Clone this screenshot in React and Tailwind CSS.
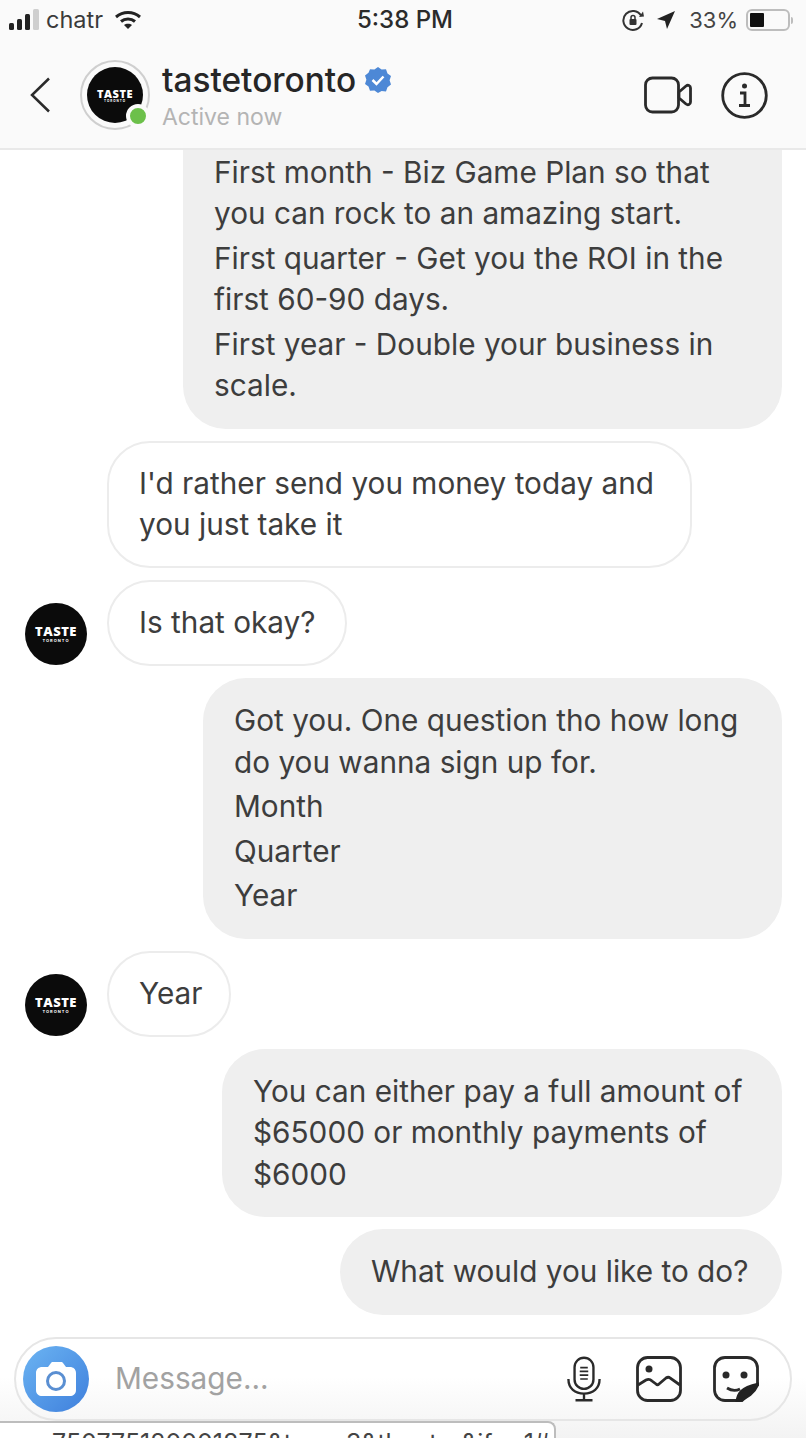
function Avatar({ size = 'w-[62px] h-[62px]', big = 'text-[13px]', small = 'text-[4px]' }) {
  return (
    <div className={`${size} rounded-full bg-[#0b0b0b] flex flex-col items-center justify-center shrink-0 text-white leading-none`}>
      <span className={`${big} font-black tracking-[0.5px] font-['Open_Sans',sans-serif]`}>TASTE</span>
      <span className={`${small} font-bold tracking-[1px] mt-[1px] whitespace-nowrap`}>TORONTO</span>
    </div>
  )
}

function Them({ width, avatar, children }) {
  return (
    <div className="flex items-center pl-[25px]">
      <div className="w-[82px] shrink-0 pt-[22px]">{avatar && <Avatar />}</div>
      <div className={`${width} rounded-[43px] border-2 border-[#ececec] bg-white pl-[30px] py-[20.25px] whitespace-nowrap`}>{children}</div>
    </div>
  )
}

function Me({ width, children, className = 'py-[22.25px]' }) {
  return (
    <div className="flex justify-end pr-[24px]">
      <div className={`${width} ${className} rounded-[43px] bg-[#efefef] pl-[31px] flex flex-col gap-[3px] whitespace-nowrap`}>{children}</div>
    </div>
  )
}

function StatusBar() {
  return (
    <div className="grid grid-cols-3 items-center h-[40px] pl-[9px] pr-[13px] text-[23.5px] leading-none">
      <div className="flex items-center text-[#3a3a3a]">
        <svg width="31" height="22" viewBox="0 0 31 22" fill="currentColor">
          <rect x="0" y="14" width="5" height="7" rx="1.5" fill="#222" />
          <rect x="8" y="10" width="5" height="11" rx="1.5" fill="#222" />
          <rect x="16" y="5" width="5" height="16" rx="1.5" fill="#222" />
          <rect x="24" y="0" width="6" height="21" rx="1.5" fill="#cfcfcf" />
        </svg>
        <span className="ml-[6px] mr-[11px]">chatr</span>
        <svg width="28" height="20" viewBox="0 0 28 20" fill="none" stroke="#222" strokeWidth="3">
          <path d="M2 7c7-6 17-6 24 0" />
          <path d="M7 11.500c4-3.500 10-3.500 14 0" />
          <path d="M14 19l-4-4c2-1.800 6-1.800 8 0z" fill="#222" stroke="none" />
        </svg>
      </div>
      <div className="text-center font-medium text-[#2b2b2b] pl-[8px] text-[24px]">5:38 PM</div>
      <div className="flex items-center justify-end text-[#444]">
        <svg width="23" height="23" viewBox="0 0 23 23" fill="none" stroke="#333" strokeWidth="2">
          <path d="M19 6.500A9.500 9.500 0 1 0 20 14" />
          <path d="M17 8l5-.5-1-5" fill="#333" stroke="none" />
          <rect x="7.500" y="10" width="7" height="6" rx="1" fill="#333" stroke="none" />
          <path d="M9 10V8.500a2 2 0 0 1 4 0V10" strokeWidth="1.500" />
        </svg>
        <svg className="ml-[11px]" width="20" height="20" viewBox="0 0 20 20" fill="#222">
          <path d="M19 1L1 9l8 2 2 8z" />
        </svg>
        <span className="ml-[13px] text-[22px]">33%</span>
        <div className="ml-[8px] flex items-center">
          <div className="w-[44px] h-[22px] rounded-[6px] border-2 border-[#bdbdbd] p-[2px]">
            <div className="w-[14px] h-full bg-[#111] rounded-[1px]" />
          </div>
          <div className="w-[2px] h-[7px] ml-[1px] bg-[#bdbdbd] rounded-r" />
        </div>
      </div>
    </div>
  )
}

function Header() {
  return (
    <div className="relative z-10 h-[150px] shrink-0 bg-[#fafafa] border-b-2 border-[#e9e9e9]">
      <StatusBar />
      <div className="flex items-center h-[108px] pt-[2px] pl-[30px] pr-[38px]">
        <svg width="20" height="36" viewBox="0 0 20 36" fill="none" stroke="#2a2a2a" strokeWidth="2.500" className="shrink-0">
          <path d="M19 1.500L2 18l17 16.500" />
        </svg>
        <div className="relative ml-[30px] w-[70px] h-[70px] rounded-full border-2 border-[#cfcfcf] flex items-center justify-center shrink-0">
          <Avatar size="w-[56px] h-[56px]" big="text-[11px]" small="text-[3px]" />
          <div className="absolute right-[-2px] bottom-[0px] w-[24px] h-[24px] rounded-full bg-[#6cc04a] border-[4px] border-[#fafafa]" />
        </div>
        <div className="ml-[12px] pt-[2px]">
          <div className="flex items-center">
            <span className="text-[33.4px] leading-[38px] font-medium text-[#262626]">tastetoronto</span>
            <svg className="ml-[8px]" width="28" height="28" viewBox="0 0 28 28">
              <path fill="#4d88d6" d="M14 1l3.600 2.600 4.400-.4 1.500 4.200 3.500 2.700-1.400 4.200 1.400 4.200-3.500 2.700-1.500 4.200-4.400-.4L14 27l-3.600-2.600-4.400.4-1.500-4.200L1 17.900l1.400-4.200L1 9.500l3.500-2.700L6 3.200l4.400.4z" />
              <path fill="none" stroke="#fff" strokeWidth="2.500" d="M8.500 14l4 4 7-7.500" />
            </svg>
          </div>
          <div className="mt-[3px] text-[23px] leading-[30px] text-[#b4b4b4]">Active now</div>
        </div>
        <div className="ml-auto flex items-center">
          <svg width="48" height="38" viewBox="0 0 48 38" fill="none" stroke="#2a2a2a" strokeWidth="2.800" strokeLinejoin="round">
            <rect x="1.500" y="2" width="33" height="34" rx="7" />
            <path d="M35 16l7-6c2-1.500 4.500-.5 4.500 2v14c0 2.500-2.500 3.500-4.500 2l-7-6z" />
          </svg>
          <svg className="ml-[29px]" width="47" height="47" viewBox="0 0 47 47" fill="none" stroke="#2a2a2a" strokeWidth="2.800">
            <circle cx="23.500" cy="23.500" r="21.800" />
            <circle cx="23.500" cy="14" r="2.500" fill="#2a2a2a" stroke="none" />
            <path d="M19 21h5v12M18 33.500h11" />
          </svg>
        </div>
      </div>
    </div>
  )
}

function Footer() {
  return (
    <div className="shrink-0 pt-[22px] pb-[17px] px-[14px] bg-gradient-to-b from-white from-50% to-[#f3f3f3]">
      <div className="h-[84px] rounded-[42px] border-2 border-[#e6e6e6] flex items-center pl-[7px] pr-[31px]">
        <div className="w-[66px] h-[66px] rounded-full bg-gradient-to-tl from-[#3f7fdc] to-[#6cb4f2] flex items-center justify-center shrink-0">
          <svg width="42" height="36" viewBox="0 0 42 36">
            <path fill="#fff" d="M7 6h6l3-4c.5-.7 1-1 2-1h8c1 0 1.500.3 2 1l3 4h4c3 0 6 2 6 6v17c0 4-3 6-6 6H7c-3 0-6-2-6-6V12c0-4 3-6 6-6z" />
            <circle cx="21" cy="20" r="8.500" fill="none" stroke="#5a8fd2" strokeWidth="3" />
          </svg>
        </div>
        <span className="ml-[26px] text-[29.75px] text-[#a2a2a2]">Message...</span>
        <div className="ml-auto flex items-center">
          <svg width="34" height="48" viewBox="0 0 36 48" fill="none" stroke="#2a2a2a" strokeWidth="2.500">
            <rect x="8" y="1.500" width="20" height="33" rx="10" />
            <path d="M1.500 24c0 10 7 15.500 16.500 15.500S34.500 34 34.500 24M18 40v6M9 46.500h18" />
            <path d="M14 12h8M13.500 16h9M13.500 20h9M14 24h8" strokeWidth="1.800" />
          </svg>
          <svg className="ml-[35px]" width="46" height="46" viewBox="0 0 46 46" fill="none" stroke="#2a2a2a" strokeWidth="2.800">
            <rect x="1.500" y="1.500" width="43" height="43" rx="10" />
            <circle cx="13" cy="13" r="3.500" fill="#2a2a2a" stroke="none" />
            <path d="M2 29l8-5c2-1 4-1 6 1l4 3c1 1 2 1 3 0l7-6c1.500-1 3-1 4 0l10 7" />
          </svg>
          <svg className="ml-[31px]" width="46" height="46" viewBox="0 0 46 46" fill="none" stroke="#2a2a2a" strokeWidth="2.800">
            <path d="M29 44.500H12A10.500 10.500 0 0 1 1.500 34V12A10.500 10.500 0 0 1 12 1.500h22A10.500 10.500 0 0 1 44.500 12v17z" />
            <circle cx="13" cy="19" r="3.500" fill="#2a2a2a" stroke="none" />
            <circle cx="31" cy="19" r="3.500" fill="#2a2a2a" stroke="none" />
            <path d="M14 32c4 2.500 9 3 13 1" />
            <path d="M24 45c1-7 3-13 21-17-3 8-11 15-21 17z" fill="#222" stroke="#222" />
          </svg>
        </div>
      </div>
    </div>
  )
}

export default function App() {
  return (
    <div className="relative w-[806px] h-[1438px] overflow-hidden bg-white flex flex-col font-['Inter','Liberation_Sans',sans-serif] text-[29.75px] leading-[41.5px] text-[#3d3d3d]">
      <Header />
      <div className="flex-1 min-h-0 overflow-hidden flex flex-col justify-end gap-[12px]">
        <div className="shrink-0">
          <Me width="w-[599px]" className="pt-[80px] pb-[22px]">
            <p>First month - Biz Game Plan so that<br />you can rock to an amazing start.</p>
            <p>First quarter - Get you the ROI in the<br />first 60-90 days.</p>
            <p>First year - Double your business in<br />scale.</p>
          </Me>
        </div>
        <Them width="w-[585px]">
          <p>I'd rather send you money today and<br />you just take it</p>
        </Them>
        <Them width="w-[240px]" avatar>
          <p>Is that okay?</p>
        </Them>
        <Me width="w-[579px]">
          <p>Got you. One question tho how long<br />do you wanna sign up for.</p>
          <p>Month</p>
          <p>Quarter</p>
          <p>Year</p>
        </Me>
        <Them width="w-[124px]" avatar>
          <p>Year</p>
        </Them>
        <Me width="w-[560px]" className="py-[21.75px]">
          <p>You can either pay a full amount of<br />$65000 or monthly payments of<br />$6000</p>
        </Me>
        <Me width="w-[442px]">
          <p>What would you like to do?</p>
        </Me>
      </div>
      <Footer />
      <div className="absolute left-0 bottom-0 w-[556px] h-[17px] bg-white border-t-2 border-r-2 border-[#bdbdbd] rounded-tr-[8px] overflow-hidden pl-[52px] text-[25px] leading-[40px] text-[#444] whitespace-nowrap">
        750775120001875&amp;t<span className="ml-[54px]">3&amp;theater&amp;ifg=1#</span>
      </div>
    </div>
  )
}
